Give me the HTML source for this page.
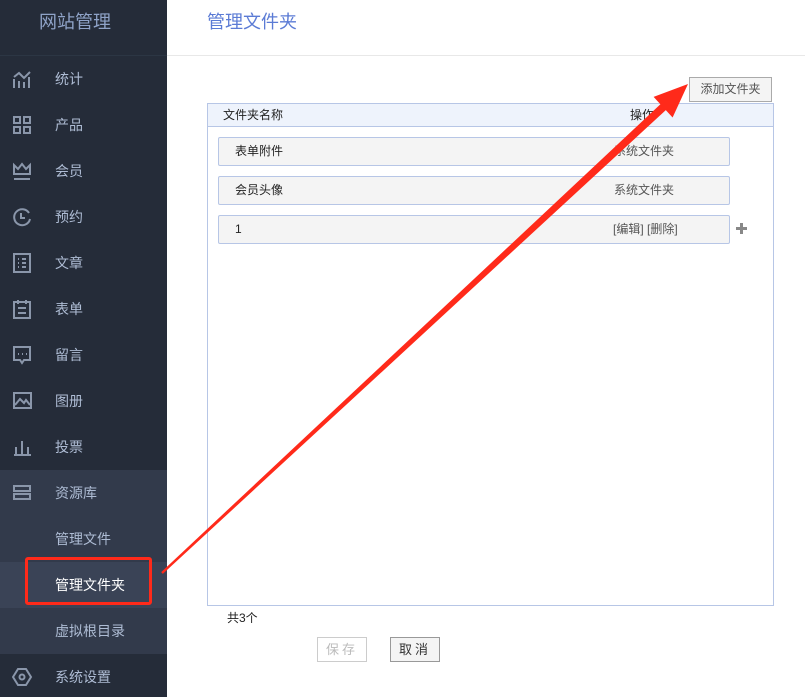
<!DOCTYPE html>
<html><head><meta charset="utf-8"><style>
*{margin:0;padding:0;box-sizing:border-box}
body{width:805px;height:697px;position:relative;overflow:hidden;background:#fff;font-family:"Liberation Sans","Noto Sans CJK SC",sans-serif;font-size:13px;color:#222}
#sb{position:absolute;left:0;top:0;width:167px;height:697px;background:#252c39}
.t{position:absolute;left:0;width:150px;top:8px;text-align:center;color:#8fa3c8;font-size:18px}
.sep{position:absolute;left:0;top:55px;width:167px;height:1px;background:#2c3644}
.it{position:absolute;left:0;width:167px;height:46px;line-height:46px;padding-left:55px;color:#aebcd4;font-size:14px}
.it svg{position:absolute;left:12px;top:13px}
.a{position:absolute;}
.row{position:absolute;left:218px;width:512px;height:29px;background:#f4f4f4;border:1px solid #b7c6e6;border-radius:2px;line-height:27px;font-size:12px}
.row .n{position:absolute;left:16px}
.row .o{position:absolute;left:395px;color:#555}
.btn{position:absolute;height:25px;line-height:23px;text-align:center;font-size:13px;border:1px solid #999;background:#f4f4f4;letter-spacing:3px}
</style></head><body>
<div id="sb">
<div class="t">网站管理</div><div class="sep"></div>
<div class="a" style="left:0;top:470px;width:167px;height:184px;background:#323a4b"></div>
<div class="a" style="left:0;top:562px;width:167px;height:46px;background:#3a4356"></div>
<div class="it" style="top:56px"><svg width="22" height="20" fill="none" stroke="#8a96aa" stroke-width="2"><path d="M2 19V10M7 19V12M12 19V13M17 19V8M2 8l5-4 5 5 6-6"/></svg>统计</div>
<div class="it" style="top:102px"><svg width="22" height="20" fill="none" stroke="#8a96aa" stroke-width="2"><rect x="2" y="2" width="6" height="6"/><rect x="12" y="2" width="6" height="6"/><rect x="2" y="12" width="6" height="6"/><rect x="12" y="12" width="6" height="6"/></svg>产品</div>
<div class="it" style="top:148px"><svg width="22" height="20" fill="none" stroke="#8a96aa" stroke-width="2"><path d="M2 4v9h16V4l-4 4-4-5-4 5zM2 18h16"/></svg>会员</div>
<div class="it" style="top:194px"><svg width="22" height="20" fill="none" stroke="#8a96aa" stroke-width="2"><path d="M17 6A8 8 0 1 0 18 12M9 6v5h4"/></svg>预约</div>
<div class="it" style="top:240px"><svg width="22" height="20" fill="none" stroke="#8a96aa" stroke-width="2"><rect x="2" y="1" width="16" height="18"/><path d="M6 6h1M10 6h4M6 10h1M10 10h4M6 14h1M10 14h4"/></svg>文章</div>
<div class="it" style="top:286px"><svg width="22" height="20" fill="none" stroke="#8a96aa" stroke-width="2"><path d="M2 3h16v16H2zM6 1v4M14 1v4M6 9h8M6 14h8"/></svg>表单</div>
<div class="it" style="top:332px"><svg width="22" height="20" fill="none" stroke="#8a96aa" stroke-width="2"><path d="M2 2h16v13h-6l-2 3-2-3H2zM6 9h1M10 9h1M14 9h1"/></svg>留言</div>
<div class="it" style="top:378px"><svg width="22" height="20" fill="none" stroke="#8a96aa" stroke-width="2"><rect x="2" y="2" width="17" height="15"/><path d="M3 14l5-6 4 4 2-3 4 5"/></svg>图册</div>
<div class="it" style="top:424px"><svg width="22" height="20" fill="none" stroke="#8a96aa" stroke-width="2"><path d="M2 18h17M4 10v7M10 4v13M16 10v7"/></svg>投票</div>
<div class="it" style="top:470px"><svg width="22" height="20" fill="none" stroke="#8a96aa" stroke-width="2"><path d="M2 3h16v5H2zM2 11h16v5H2z"/></svg>资源库</div>
<div class="it" style="top:516px">管理文件</div>
<div class="it" style="top:562px;color:#fff">管理文件夹</div>
<div class="it" style="top:608px">虚拟根目录</div>
<div class="it" style="top:654px"><svg width="22" height="20" fill="none" stroke="#8a96aa" stroke-width="2"><path d="M6 2h8l5 8-5 8H6l-5-8z"/><circle cx="10" cy="10" r="2.5"/></svg>系统设置</div>
</div>
<div class="a" style="left:207px;top:8px;color:#5b7bd5;font-size:18px">管理文件夹</div>
<div class="a" style="left:167px;top:55px;width:638px;height:1px;background:#e8e8e8"></div>
<div class="btn" style="left:689px;top:77px;width:83px;letter-spacing:0;font-size:12px;color:#555;border-color:#aaa">添加文件夹</div>
<div class="a" style="left:207px;top:103px;width:567px;height:503px;border:1px solid #b7c6e6"></div>
<div class="a" style="left:208px;top:104px;width:565px;height:23px;background:#eef3fc;border-bottom:1px solid #b7c6e6;font-size:12px;line-height:23px"><span style="position:absolute;left:15px">文件夹名称</span><span style="position:absolute;left:422px">操作</span></div>
<div class="row" style="top:137px"><span class="n">表单附件</span><span class="o">系统文件夹</span></div>
<div class="row" style="top:176px"><span class="n">会员头像</span><span class="o">系统文件夹</span></div>
<div class="row" style="top:215px"><span class="n">1</span><span class="o" style="left:394px">[编辑] [删除]</span></div>
<svg class="a" style="left:736px;top:223px" width="11" height="11"><path d="M4 0h3v4h4v3H7v4H4V7H0V4h4z" fill="#888"/></svg>
<div class="a" style="left:227px;top:609px;font-size:12px">共3个</div>
<div class="btn" style="left:317px;top:637px;width:50px;color:#bbb;border-color:#ccc;background:#fff">保存</div>
<div class="btn" style="left:390px;top:637px;width:50px;color:#333">取消</div>
<div class="a" style="left:25px;top:557px;width:127px;height:48px;border:3px solid #ff2a1a;border-radius:3px"></div>
<svg class="a" style="left:0;top:0" width="805" height="697"><polygon fill="#ff2a1a" points="688,84 672.6,117.5 665.8,110.1 162.8,573.9 161.2,572.1 660.4,104.3 653.6,96.9"/></svg>
</body></html>
